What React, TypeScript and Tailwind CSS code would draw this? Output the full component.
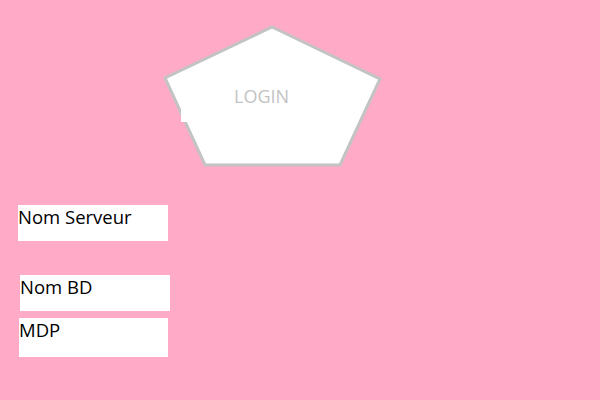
export default function App() {
  return (
    <div className="flex flex-col w-[600px] h-[400px] bg-[#ffabc8] overflow-hidden" style={{ fontFamily: '"Open Sans", "Liberation Sans", sans-serif' }}>
      <div className="relative ml-[160px] mt-[22px] w-[225px] h-[148px]">
        <svg width="225" height="148" viewBox="0 0 225 148" className="block">
          <polygon points="112,5 220,57 180,143 45,143 5,56" fill="#fff" stroke="#c3c3c3" strokeWidth="3" />
          <rect x="21" y="86" width="10" height="14" fill="#fff" />
        </svg>
        <div className="absolute left-[74px] top-[62px] text-[18px] leading-[24px] text-[#c3c3c3]">LOGIN</div>
      </div>
      <div className="ml-[18px] mt-[35px] w-[150px] h-[36px] bg-white text-[18.5px] leading-[24px] text-black">Nom Serveur</div>
      <div className="ml-[20px] mt-[34px] w-[150px] h-[36px] bg-white text-[18.5px] leading-[24px] text-black">Nom BD</div>
      <div className="ml-[19px] mt-[7px] w-[149px] h-[39px] bg-white text-[18.5px] leading-[24px] text-black">MDP</div>
    </div>
  );
}
